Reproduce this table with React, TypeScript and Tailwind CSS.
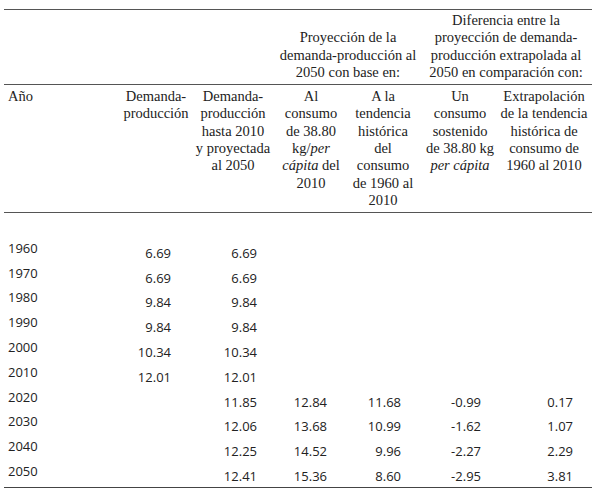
import React from 'react';

const rows: { year: string; vals: string[] }[] = [
  { year: '1960', vals: ['6.69', '6.69', '', '', '', ''] },
  { year: '1970', vals: ['6.69', '6.69', '', '', '', ''] },
  { year: '1980', vals: ['9.84', '9.84', '', '', '', ''] },
  { year: '1990', vals: ['9.84', '9.84', '', '', '', ''] },
  { year: '2000', vals: ['10.34', '10.34', '', '', '', ''] },
  { year: '2010', vals: ['12.01', '12.01', '', '', '', ''] },
  { year: '2020', vals: ['', '11.85', '12.84', '11.68', '-0.99', '0.17'] },
  { year: '2030', vals: ['', '12.06', '13.68', '10.99', '-1.62', '1.07'] },
  { year: '2040', vals: ['', '12.25', '14.52', '9.96', '-2.27', '2.29'] },
  { year: '2050', vals: ['', '12.41', '15.36', '8.60', '-2.95', '3.81'] },
];

export default function App() {
  return (
    <div className="w-[600px] h-[497px] bg-white pl-[4px] pt-[9px]">
      <table className="table-fixed w-[588px] border-collapse text-[#222]">
        <colgroup>
          <col className="w-[118px]" />
          <col className="w-[68px]" />
          <col className="w-[86px]" />
          <col className="w-[70px]" />
          <col className="w-[74px]" />
          <col className="w-[80px]" />
          <col className="w-[92px]" />
        </colgroup>
        <thead className="font-['Liberation_Serif'] text-[14.5px] leading-[17.3px]">
          <tr className="border-t-[1.5px] border-b border-[#555]">
            <th colSpan={3}></th>
            <th colSpan={2} className="font-normal text-center align-bottom pt-[2px] pb-[3px]">
              Proyección de la
              <br />
              demanda-producción al
              <br />
              2050 con base en:
            </th>
            <th colSpan={2} className="font-normal text-center align-bottom pt-[2px] pb-[3px]">
              Diferencia entre la
              <br />
              proyección de demanda-
              <br />
              producción extrapolada al
              <br />
              2050 en comparación con:
            </th>
          </tr>
          <tr className="border-b border-[#555] align-top">
            <th className="font-normal text-left pl-[4px] pt-[3px] pb-[3px]">Año</th>
            <th className="font-normal text-center pt-[3px] whitespace-nowrap">
              Demanda-
              <br />
              producción
            </th>
            <th className="font-normal text-center pt-[3px] whitespace-nowrap">
              Demanda-
              <br />
              producción
              <br />
              hasta 2010
              <br />
              y proyectada
              <br />
              al 2050
            </th>
            <th className="font-normal text-center pt-[3px] whitespace-nowrap">
              Al
              <br />
              consumo
              <br />
              de 38.80
              <br />
              kg/<i>per</i>
              <br />
              <i>cápita</i> del
              <br />
              2010
            </th>
            <th className="font-normal text-center pt-[3px] pb-[3px] whitespace-nowrap">
              A la
              <br />
              tendencia
              <br />
              histórica
              <br />
              del
              <br />
              consumo
              <br />
              de 1960 al
              <br />
              2010
            </th>
            <th className="font-normal text-center pt-[3px] whitespace-nowrap">
              Un
              <br />
              consumo
              <br />
              sostenido
              <br />
              de 38.80 kg
              <br />
              <i>per cápita</i>
            </th>
            <th className="font-normal text-center pt-[3px] pr-[4px] whitespace-nowrap">
              Extrapolación
              <br />
              de la tendencia
              <br />
              histórica de
              <br />
              consumo de
              <br />
              1960 al 2010
            </th>
          </tr>
        </thead>
        <tbody className="font-['Open_Sans'] text-[13px] leading-[19.8px]">
          <tr>
            <td colSpan={7} className="h-[26px] p-0"></td>
          </tr>
          {rows.map((r, i) => (
            <tr key={r.year} className={i === rows.length - 1 ? 'border-b border-[#444]' : ''}>
              <td className="align-top pl-[4px] pb-[5px]">{r.year}</td>
              {r.vals.map((v, j) => (
                <td key={j} className="align-top text-right pt-[5px] pr-[19px]">
                  {v}
                </td>
              ))}
            </tr>
          ))}
        </tbody>
      </table>
    </div>
  );
}
